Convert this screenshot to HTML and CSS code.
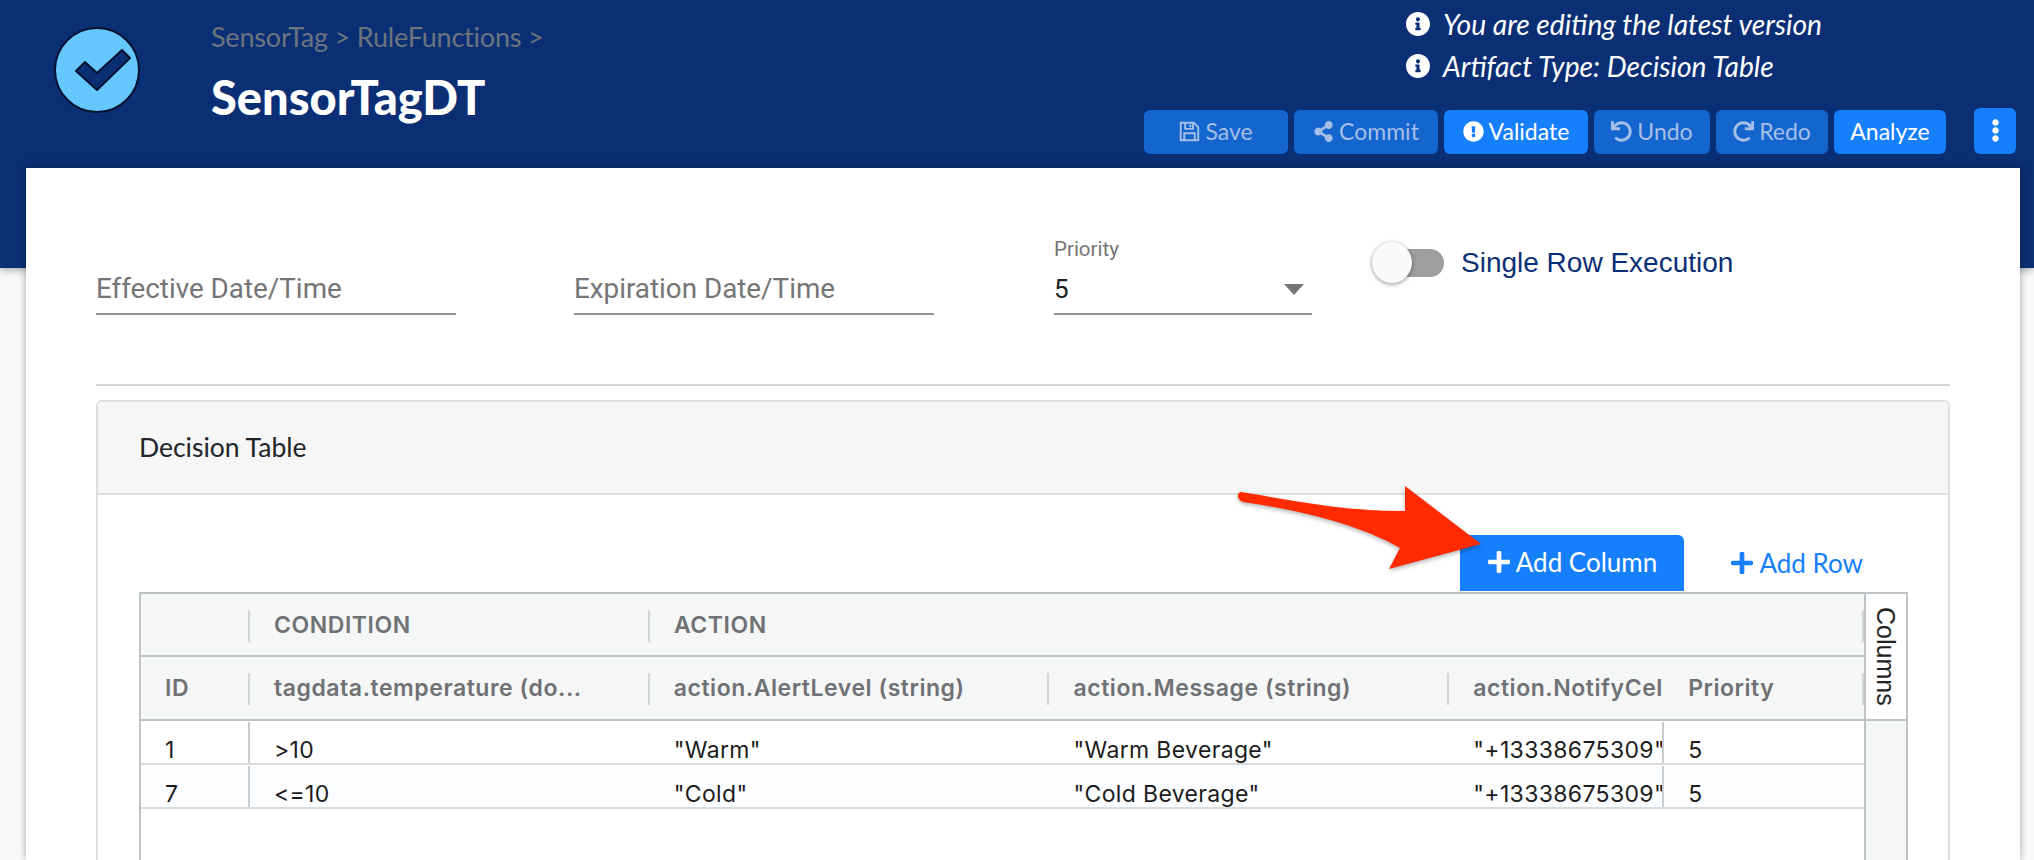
FILE: index.html
```html
<!DOCTYPE html>
<html>
<head>
  <meta charset="utf-8">
  <title>SensorTagDT</title>
  <link rel="stylesheet" href="styles.css">
</head>
<body>
  <svg class="defs" width="0" height="0">
    <symbol id="i-info" viewBox="8 8 496 496"><path d="M256 8C119.043 8 8 119.083 8 256c0 136.997 111.043 248 248 248s248-111.003 248-248C504 119.083 392.957 8 256 8zm0 110c23.196 0 42 18.804 42 42s-18.804 42-42 42-42-18.804-42-42 18.804-42 42-42zm56 254c0 6.627-5.373 12-12 12h-88c-6.627 0-12-5.373-12-12v-24c0-6.627 5.373-12 12-12h12v-64h-12c-6.627 0-12-5.373-12-12v-24c0-6.627 5.373-12 12-12h64c6.627 0 12 5.373 12 12v100h12c6.627 0 12 5.373 12 12v24z"/></symbol>
    <symbol id="i-plus" viewBox="0 32 448 448"><path d="M416 208H272V64c0-17.67-14.33-32-32-32h-32c-17.67 0-32 14.33-32 32v144H32c-17.67 0-32 14.33-32 32v32c0 17.67 14.33 32 32 32h144v144c0 17.67 14.33 32 32 32h32c17.67 0 32-14.33 32-32V304h144c17.67 0 32-14.33 32-32v-32c0-17.67-14.33-32-32-32z"/></symbol>
  </svg>

  <header class="topbar">
    <svg class="logo" viewBox="0 0 90 90" width="90" height="90">
      <circle cx="45" cy="45" r="42" fill="#66c7ff" stroke="#06122e" stroke-width="2"/>
      <path d="M24 46L33 37 L45 48 L70 25 L78 33 L45 65 Z" fill="#0b2f75" stroke="#06122e" stroke-width="2" stroke-linejoin="round"/>
    </svg>
    <div class="titles">
      <div class="crumbs">SensorTag &gt; RuleFunctions &gt;</div>
      <h1 class="title">SensorTagDT</h1>
    </div>
    <div class="top-right">
      <div class="notes">
        <div class="note"><svg class="note-icon"><use href="#i-info"/></svg><em>You are editing the latest version</em></div>
        <div class="note"><svg class="note-icon"><use href="#i-info"/></svg><em>Artifact Type: Decision Table</em></div>
      </div>
      <div class="toolbar">
        <button class="btn off w-save">
          <svg class="btn-icon" viewBox="0 0 24 24" fill="none" stroke="currentColor" stroke-width="2.2"><path d="M2 2H17L22 7V22H2Z"/><path d="M7 2V9H16V2M13 4V7"/><path d="M6 22V14H18V22"/></svg>Save
        </button>
        <button class="btn off w-save">
          <svg class="btn-icon" viewBox="0 0 448 512" fill="currentColor"><path d="M352 320c-22.608 0-43.387 7.819-59.79 20.895l-102.486-64.054a96.551 96.551 0 0 0 0-41.683l102.486-64.054C308.613 184.181 329.392 192 352 192c53.019 0 96-42.981 96-96S405.019 0 352 0s-96 42.981-96 96c0 7.158.79 14.13 2.276 20.841L155.79 180.895C139.387 167.819 118.608 160 96 160c-53.019 0-96 42.981-96 96s42.981 96 96 96c22.608 0 43.387-7.819 59.79-20.895l102.486 64.054A96.301 96.301 0 0 0 256 416c0 53.019 42.981 96 96 96s96-42.981 96-96-42.981-96-96-96z"/></svg>Commit
        </button>
        <button class="btn w-save">
          <svg class="btn-icon" viewBox="0 0 512 512" fill="currentColor"><path d="M504 256c0 136.997-111.043 248-248 248S8 392.997 8 256C8 119.083 119.043 8 256 8s248 111.083 248 248zm-248 50c-25.405 0-46 20.595-46 46s20.595 46 46 46 46-20.595 46-46-20.595-46-46-46zm-43.673-165.346l7.418 136c.347 6.364 5.609 11.346 11.982 11.346h48.546c6.373 0 11.635-4.982 11.982-11.346l7.418-136c.375-6.874-5.098-12.654-11.982-12.654h-63.383c-6.884 0-12.356 5.78-11.981 12.654z"/></svg>Validate
        </button>
        <button class="btn off w-undo">
          <svg class="btn-icon" viewBox="0 0 512 512" fill="currentColor"><path d="M212.333 224.333H12c-6.627 0-12-5.373-12-12V12C0 5.373 5.373 0 12 0h48c6.627 0 12 5.373 12 12v78.112C117.773 39.279 184.26 7.47 258.175 8.007c136.906.994 246.448 111.623 246.157 248.532C504.041 393.258 393.12 504 256.333 504c-64.089 0-122.496-24.313-166.51-64.215-5.099-4.622-5.334-12.554-.467-17.42l33.967-33.967c4.474-4.474 11.662-4.717 16.401-.525C170.76 415.336 211.58 432 256.333 432c97.268 0 176-78.716 176-176 0-97.267-78.716-176-176-176-58.496 0-110.28 28.476-142.274 72.333h98.274c6.627 0 12 5.373 12 12v48c0 6.627-5.373 12-12 12z"/></svg>Undo
        </button>
        <button class="btn off w-redo">
          <svg class="btn-icon" viewBox="0 0 512 512" fill="currentColor"><path d="M500.333 0h-47.411c-6.853 0-12.314 5.729-11.986 12.574l3.966 82.759C399.416 41.899 331.672 8 256.001 8 119.34 8 7.899 119.526 8 256.187 8.101 393.068 119.096 504 256 504c63.926 0 122.202-24.187 166.178-63.908 5.113-4.618 5.354-12.561.482-17.433l-33.971-33.971c-4.466-4.466-11.64-4.717-16.38-.543C341.308 415.448 300.606 432 256 432c-97.267 0-176-78.716-176-176 0-97.267 78.716-176 176-176 60.892 0 114.506 30.858 146.099 77.8l-101.525-4.865c-6.845-.328-12.574 5.133-12.574 11.986v47.411c0 6.627 5.373 12 12 12h200.333c6.627 0 12-5.373 12-12V12c0-6.627-5.373-12-12-12z"/></svg>Redo
        </button>
        <button class="btn w-redo">Analyze</button>
        <button class="btn kebab">
          <svg viewBox="0 0 192 512" width="9" height="23" fill="currentColor"><path d="M96 184c39.8 0 72 32.2 72 72s-32.2 72-72 72-72-32.2-72-72 32.2-72 72-72zM24 80c0 39.8 32.2 72 72 72s72-32.2 72-72S135.8 8 96 8 24 40.2 24 80zm0 352c0 39.8 32.2 72 72 72s72-32.2 72-72-32.2-72-72-72-72 32.2-72 72z"/></svg>
        </button>
      </div>
    </div>
  </header>

  <main class="card">
    <div class="form-row">
      <div class="field date-field"><span class="placeholder">Effective Date/Time</span></div>
      <div class="field date-field"><span class="placeholder">Expiration Date/Time</span></div>
      <div class="field select-field">
        <label class="field-label">Priority</label>
        <div class="select-value">5<span class="caret"></span></div>
      </div>
      <div class="switch-wrap">
        <span class="switch"><span class="thumb"></span></span>
        <span class="switch-label">Single Row Execution</span>
      </div>
    </div>
    <hr class="rule">

    <section class="panel">
      <div class="panel-head">Decision Table</div>
      <div class="panel-body">
        <div class="grid-actions">
          <button class="btn add-col"><svg class="plus"><use href="#i-plus"/></svg>Add Column</button>
          <a class="add-row"><svg class="plus"><use href="#i-plus"/></svg>Add Row</a>
        </div>
        <div class="grid">
          <div class="grid-main">
            <div class="grid-row head">
              <div class="cell id-col sep"></div>
              <div class="cell cond-col sep">CONDITION</div>
              <div class="cell action-group sep">ACTION</div>
            </div>
            <div class="grid-row head tall">
              <div class="cell id-col sep">ID</div>
              <div class="cell cond-col sep">tagdata.temperature (do...</div>
              <div class="cell std-col sep">action.AlertLevel (string)</div>
              <div class="cell std-col sep">action.Message (string)</div>
              <div class="cell notify-col">action.NotifyCel</div>
              <div class="cell prio-col sep">Priority</div>
            </div>
            <div class="grid-row body">
              <div class="cell id-col sep">1</div>
              <div class="cell cond-col">&gt;10</div>
              <div class="cell std-col">"Warm"</div>
              <div class="cell std-col">"Warm Beverage"</div>
              <div class="cell notify-col sep">"+13338675309"</div>
              <div class="cell prio-col">5</div>
            </div>
            <div class="grid-row body alt">
              <div class="cell id-col sep">7</div>
              <div class="cell cond-col">&lt;=10</div>
              <div class="cell std-col">"Cold"</div>
              <div class="cell std-col">"Cold Beverage"</div>
              <div class="cell notify-col sep">"+13338675309"</div>
              <div class="cell prio-col">5</div>
            </div>
          </div>
          <div class="side-bar"><div class="side-tab">Columns</div></div>
        </div>
      </div>
    </section>
  </main>

  <!-- callout drawn over the screenshot -->
  <svg class="callout" width="260" height="100" viewBox="1230 480 260 100">
    <path d="M1241 492C1290 500 1350 512 1405 511L1405 486L1481 544L1389 569L1400 548C1360 525 1300 510 1243 502C1237 500 1236 493 1241 492Z" fill="#ff2a00"/>
  </svg>
</body>
</html>
```

FILE: styles.css
```css
html, body {
  margin: 0;
  height: 860px;
  overflow: hidden;
}
body {
  position: relative;
  background: #fafafa;
  font-family: "Lato", "Liberation Sans", sans-serif;
  color: #212529;
}
.defs {
  position: absolute;
}

/* header */
.topbar {
  box-sizing: border-box;
  height: 268px;
  background: #0b2f75;
  display: flex;
  align-items: flex-start;
  padding: 0 18px 0 52px;
  box-shadow: 0 2px 8px rgba(0,0,0,.35);
}
.logo {
  margin-top: 25px;
  flex: none;
}
.titles {
  margin-left: 69px;
  padding-top: 20px;
}
.crumbs {
  font-size: 27px;
  line-height: 34px;
  letter-spacing: -.2px;
  color: #6c757d;
}
.title {
  margin: 18px 0 0;
  font-size: 47px;
  line-height: 50px;
  font-weight: 900;
  color: #fff;
}
.top-right {
  margin-left: auto;
  width: 872px;
}
.notes {
  padding: 3px 0 0 262px;
}
.note {
  display: flex;
  align-items: center;
  height: 42px;
  color: #fff;
  font-size: 28.2px;
}
.note-icon {
  width: 24px;
  height: 24px;
  fill: #fff;
  margin-right: 13px;
}
.toolbar {
  display: flex;
  align-items: flex-end;
  gap: 6px;
  height: 46px;
  margin-top: 21px;
}

/* buttons */
.btn {
  display: flex;
  align-items: center;
  justify-content: center;
  box-sizing: border-box;
  height: 44px;
  border: 0;
  border-radius: 6px;
  padding: 0 0 2px;
  background: #167ffc;
  color: #fff;
  font: 23px "Lato", sans-serif;
}
.btn.off {
  background: #1565cf;
  color: #a5bfe6;
}
.w-save { width: 144px; }
.w-undo { width: 116px; }
.w-redo { width: 112px; }
.btn-icon {
  width: 21px;
  height: 21px;
  margin-right: 5px;
}
.kebab {
  width: 42px;
  height: 46px;
  margin-left: 22px;
}

/* main card */
.card {
  position: relative;
  box-sizing: border-box;
  margin: -100px 14px 0 26px;
  height: 692px;
  overflow: hidden;
  padding: 0 70px;
  background: #fff;
  box-shadow: 0 0 8px rgba(0,0,0,.35);
}
.form-row {
  display: flex;
  height: 216px;
  font-family: "Roboto", sans-serif;
}
.field {
  box-sizing: border-box;
  height: 147px;
  border-bottom: 2px solid #949494;
}
.date-field {
  width: 360px;
  margin-right: 118px;
  padding-top: 104px;
}
.placeholder {
  font-size: 27.8px;
  line-height: 34px;
  color: #757575;
}
.select-field {
  width: 258px;
  margin-left: 2px;
  padding-top: 70px;
}
.field-label {
  display: block;
  font-size: 20.5px;
  line-height: 22px;
  color: #757575;
}
.select-value {
  display: flex;
  justify-content: space-between;
  align-items: center;
  margin-top: 12px;
  padding-right: 8px;
  font-size: 26px;
  line-height: 34px;
  color: #212121;
}
.caret {
  border: 10px solid transparent;
  border-top: 11px solid #757575;
  border-bottom: 0;
}
.switch-wrap {
  display: flex;
  align-items: center;
  height: 42px;
  margin: 74px 0 0 62px;
}
.switch {
  position: relative;
  width: 70px;
  height: 28px;
  border-radius: 14px;
  background: #9e9e9e;
  margin-right: 17px;
}
.thumb {
  position: absolute;
  left: -2px;
  top: -7px;
  width: 40px;
  height: 41px;
  border-radius: 50%;
  background: #fafafa;
  box-shadow: 0 1px 4px rgba(0,0,0,.45);
}
.switch-label {
  font: 28px "Liberation Sans", sans-serif;
  color: #0b2f75;
}
.rule {
  margin: 0;
  border: 0;
  border-top: 2px solid #d6d6d6;
}

/* decision table panel */
.panel {
  margin-top: 14px;
  height: 500px;
  border: 2px solid #dfdfdf;
  border-radius: 6px;
}
.panel-head {
  box-sizing: border-box;
  height: 93px;
  padding: 0 41px;
  line-height: 90px;
  font-size: 26.5px;
  background: #f6f6f6;
  border-bottom: 2px solid #dfdfdf;
  border-radius: 6px 6px 0 0;
}
.panel-body {
  padding: 40px 41px 0;
}
.grid-actions {
  display: flex;
  justify-content: flex-end;
  align-items: center;
  height: 56px;
  padding-right: 44px;
}
.add-col {
  width: 224px;
  height: 56px;
  font-size: 26px;
  border-radius: 6px 6px 0 0;
  margin-right: 47px;
}
.add-row {
  display: flex;
  align-items: center;
  font-size: 26px;
  color: #167ffc;
}
.plus {
  width: 22px;
  height: 22px;
  margin-right: 6px;
  fill: currentColor;
}

.grid {
  display: flex;
  width: 1769px;
  height: 400px;
  box-sizing: border-box;
  border: 2px solid #bdc3c7;
  margin-top: 1px;
  font-family: "Inter", "Liberation Sans", sans-serif;
}
.grid-main {
  flex: 1;
  min-width: 0;
}
.grid-row {
  display: flex;
  box-sizing: border-box;
}
.grid-row.head {
  height: 63px;
  background: #f5f7f7;
  border-bottom: 2px solid #bdc3c7;
  font-size: 23px;
  font-weight: 600;
  letter-spacing: .55px;
  color: #6f7174;
}
.grid-row.head.tall {
  height: 64px;
}
.grid-row.body {
  height: 44px;
  font-size: 23px;
  letter-spacing: .35px;
  color: #1c1c1c;
  border-bottom: 2px solid #d9dcde;
}
.grid-row.alt {
  background: #fcfdfe;
}
.cell {
  position: relative;
  box-sizing: border-box;
  padding-left: 24px;
  white-space: nowrap;
  overflow: hidden;
  line-height: 63px;
}
.body .cell {
  line-height: 58px;
}
.sep::after {
  content: "";
  position: absolute;
  right: 0;
  top: 16px;
  height: 32px;
  width: 2px;
  background: #d3d6d8;
}
.body .sep::after {
  top: 1px;
  height: 41px;
  background: #c9cdd0;
}
.id-col { width: 109px; }
.cond-col, .std-col { width: 400px; }
.action-group { width: 1214px; }
.notify-col { width: 215px; }
.prio-col { width: 200px; }

.side-bar {
  width: 40px;
  flex: none;
  border-left: 2px solid #bdc3c7;
  background: #f5f7f7;
}
.side-tab {
  box-sizing: border-box;
  height: 127px;
  background: #fff;
  border-bottom: 2px solid #bdc3c7;
  writing-mode: vertical-rl;
  font: 25px/40px "Liberation Sans", sans-serif;
  padding-top: 13px;
  color: #222;
}

.callout {
  position: absolute;
  left: 1230px;
  top: 480px;
  filter: drop-shadow(0 2px 2px rgba(0,0,0,.3));
}
```
